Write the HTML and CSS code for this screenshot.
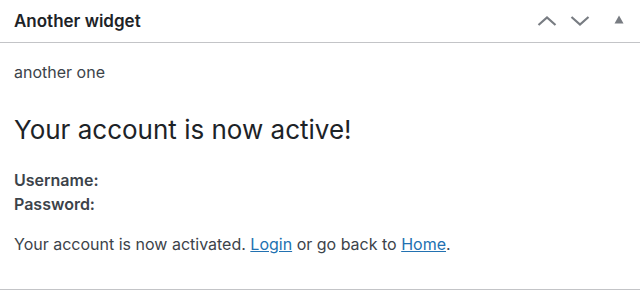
FILE: index.html
```html
<!DOCTYPE html>
<html>
<head>
<meta charset="utf-8">
<link rel="stylesheet" href="styles.css">
</head>
<body>
<div class="postbox">
  <div class="postbox-header">
    <h2 class="title">Another widget</h2>
    <div class="actions">
      <button class="btn" aria-label="Move up">
        <svg width="20" height="20" viewBox="0 0 20 20"><path d="M1.5 14 L10 6.5 L18.5 14" fill="none" stroke="#787c82" stroke-width="2.2"/></svg>
      </button>
      <button class="btn" aria-label="Move down">
        <svg width="20" height="20" viewBox="0 0 20 20"><path d="M1.5 6 L10 13.5 L18.5 6" fill="none" stroke="#787c82" stroke-width="2.2"/></svg>
      </button>
      <button class="btn toggle" aria-label="Toggle panel">
        <svg width="20" height="20" viewBox="0 0 20 20"><path d="M10 5.5 L14.5 13.5 L5.5 13.5 Z" fill="#787c82"/></svg>
      </button>
    </div>
  </div>
  <div class="inside">
    <p class="desc">another one</p>
    <h1 class="headline">Your account is now active!</h1>
    <div class="creds">
      <div class="cred"><strong>Username:</strong></div>
      <div class="cred"><strong>Password:</strong></div>
    </div>
    <p class="msg">Your account is now activated. <a href="#">Login</a> or go back to <a href="#">Home</a>.</p>
  </div>
</div>
</body>
</html>
```
FILE: styles.css
```css
html, body {
  margin: 0;
  padding: 0;
  background: #fff;
}
body {
  font-family: Inter, "Liberation Sans", sans-serif;
  color: #3c434a;
  font-size: 16px;
}
.postbox {
  width: 640px;
  border-bottom: 1px solid #c3c4c7;
  box-sizing: border-box;
  height: 290px;
}
.postbox-header {
  height: 42px;
  border-bottom: 1px solid #c3c4c7;
  display: flex;
  align-items: center;
  justify-content: space-between;
  padding-left: 14px;
}
.title {
  margin: 0;
  font-size: 17px;
  font-weight: 600;
  color: #1d2327;
}
.actions {
  display: flex;
  align-items: center;
  height: 100%;
}
.btn {
  width: 33px;
  height: 42px;
  border: 0;
  background: none;
  padding: 0;
  display: flex;
  align-items: center;
  justify-content: center;
}
.btn svg { display: block; }
.toggle { width: 40px; margin-left: 4px; padding-right: 3px; box-sizing: border-box; }
.toggle svg { margin-top: -2px; }
.inside {
  padding: 18px 14px 0;
}
.desc {
  margin: 0;
  line-height: 22px;
}
.headline {
  margin: 29px 0 0;
  font-size: 26px;
  font-weight: 400;
  color: #1d2327;
  line-height: 36px;
}
.creds {
  margin-top: 20px;
}
.cred {
  line-height: 24px;
  font-weight: 600;
}
.cred strong { font-weight: 600; }
.msg {
  margin: 16px 0 0;
  line-height: 24px;
}
.msg a {
  color: #2271b1;
  text-decoration: underline;
}
```
